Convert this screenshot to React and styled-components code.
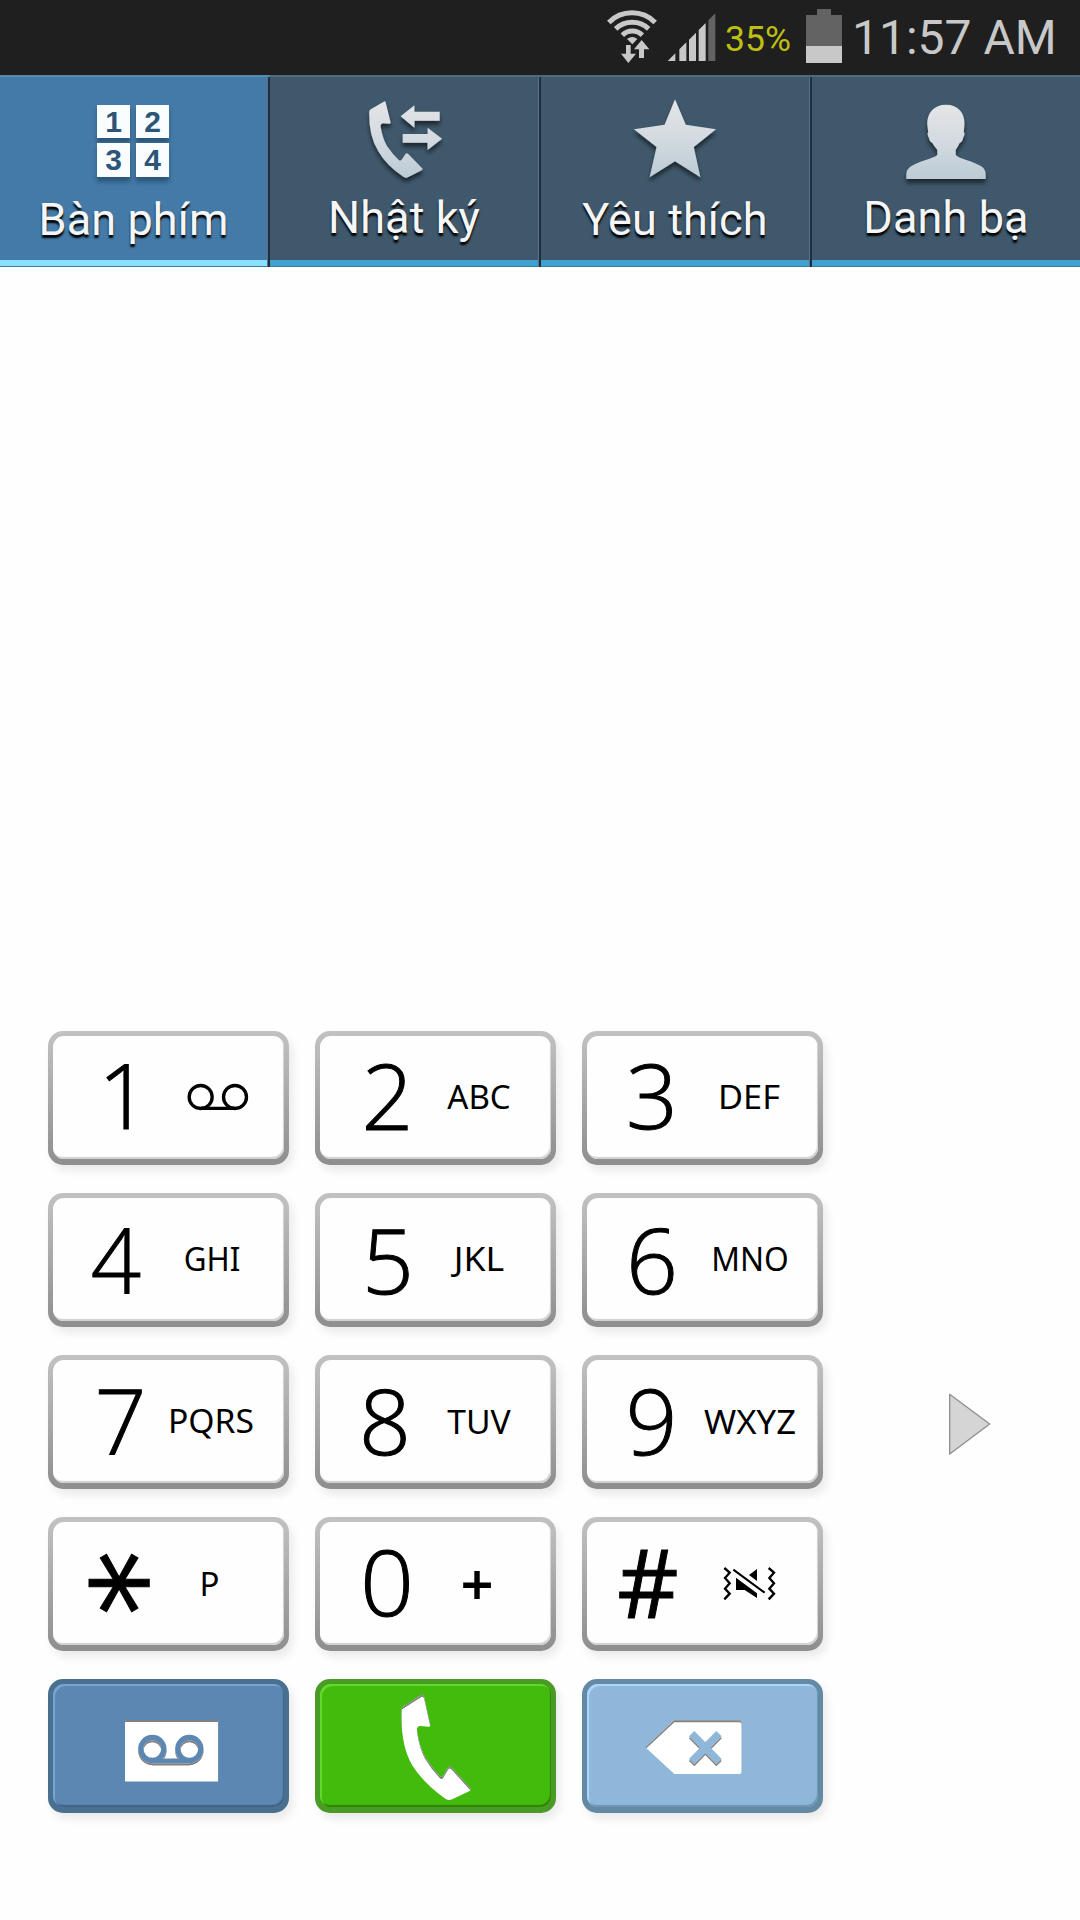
import React from "react";
import styled, { createGlobalStyle } from "styled-components";

const GlobalStyle = createGlobalStyle`
  * { box-sizing: border-box; }
  body { margin: 0; background: #fefefe; font-family: Roboto, "Noto Sans", sans-serif; }
`;

const Screen = styled.div`
  width: 1080px;
  height: 1920px;
  display: flex;
  flex-direction: column;
  background: #fefefe;
  overflow: hidden;
`;

const StatusBar = styled.header`
  height: 75px;
  flex: none;
  display: flex;
  justify-content: flex-end;
  align-items: flex-start;
  padding-right: 23px;
  background: #1f1f1f;
  color: #c8c8c8;
`;

const Icon = styled.svg`
  display: block;
  flex: none;
  width: ${(p) => p.$w}px;
  height: ${(p) => p.$h}px;
  margin: ${(p) => p.$top || 0}px 0 0 ${(p) => p.$left || 0}px;
`;

const BatteryLevel = styled.span`
  width: 67px;
  margin-left: 9px;
  font-size: 35.5px;
  line-height: 78px;
  color: #bfbf12;
  white-space: nowrap;
`;

const Clock = styled.time`
  width: 205px;
  margin-left: 10px;
  font-size: 48px;
  line-height: 75px;
  white-space: nowrap;
`;

const Tabs = styled.nav`
  height: 192px;
  flex: none;
  display: grid;
  grid-template-columns: 270px 271px 271px 268px;
`;

const Tab = styled.button`
  display: flex;
  flex-direction: column;
  align-items: center;
  margin: 0;
  padding: 0 ${(p) => (p.$last ? 0 : 3)}px 0 0;
  border: 0;
  border-top: 2px solid ${(p) => (p.$active ? "#5489b0" : "#52697d")};
  background:
    linear-gradient(${(p) => (p.$active ? "#8ce0ff, #8ce0ff" : "#41a0d0, #41a0d0")}) 0 183px / 100% 6px no-repeat,
    linear-gradient(#347fa5, #347fa5) 0 189px / 100% 1px no-repeat,
    ${(p) => (p.$active ? "#447aa7" : "#3f586b")};
  box-shadow: ${(p) => (p.$last ? "none" : "inset -2px 0 #1e303f, inset -3px 0 #5a7186")};
  font-family: inherit;
`;

const TabLabel = styled.span`
  margin-top: ${(p) => p.$top}px;
  font-size: 45px;
  line-height: 54px;
  letter-spacing: 0.1px;
  color: #f6f6f6;
  text-shadow: 0 3px 2px #000;
  white-space: nowrap;
`;

const Main = styled.main`
  flex: 1;
  display: flex;
  align-items: flex-start;
  padding: 764px 0 0 48px;
`;

const Pad = styled.div`
  display: grid;
  grid-template-columns: repeat(3, 241px);
  grid-auto-rows: 134px;
  gap: 28px 26px;
`;

const tones = {
  plain: { rim: "linear-gradient(#c2c2c2, #8e8e8e)", face: "#fefefe", inner: "inset -1px -2px 1px #d0d0d0" },
  blue: { rim: "#4a7090", face: "#5b87b2", inner: "inset 2px 2px 1px #79a5d3, inset -1px -2px 1px #3f6388" },
  green: { rim: "#4a9a26", face: "#42bb0c", inner: "inset 2px 2px 1px #62dc2c, inset -1px -2px 1px #2d8406" },
  sky: { rim: "#6489a5", face: "#8fb7da", inner: "inset 2px 2px 1px #aed6fa, inset -1px -2px 1px #6d94b5" },
};

const KeyShell = styled.button`
  display: flex;
  margin: 0;
  padding: 5px 5px 6px 5px;
  border: 0;
  border-radius: 15px;
  background: ${(p) => tones[p.$tone].rim};
  box-shadow: 4px 6px 9px rgba(0, 0, 0, 0.08);
  color: #000;
  text-align: left;
`;

const KeyFace = styled.span`
  flex: 1;
  height: 123px;
  display: flex;
  align-items: flex-start;
  border-radius: 11px;
  background: ${(p) => tones[p.$tone].face};
  box-shadow: ${(p) => tones[p.$tone].inner};
`;

const Digit = styled.span`
  width: 80px;
  margin-left: ${(p) => p.$cx - 45}px;
  text-align: center;
  font-family: "Open Sans", "Noto Sans", sans-serif;
  font-weight: ${(p) => p.$weight || 300};
  font-size: ${(p) => p.$size || 91}px;
  line-height: 122px;
  -webkit-text-stroke: 1px #000;
  transform: translateY(${(p) => (p.$dy || 0) - 3}px) scaleX(${(p) => p.$sx || 1});
`;

const StarDigit = styled(Digit)`
  font-family: "DejaVu Sans", sans-serif;
  font-weight: 400;
  font-size: 131px;
  transform: translateX(-24px) rotate(90deg);
`;

const Letters = styled.span`
  width: 120px;
  margin-left: ${(p) => p.$cx - p.$from - 100}px;
  display: flex;
  justify-content: center;
  font-family: "Noto Sans", "Open Sans", sans-serif;
  font-size: ${(p) => p.$size || 33}px;
  font-weight: ${(p) => p.$weight || 400};
  line-height: 120px;
  white-space: nowrap;
  transform: translateY(${(p) => p.$dy || 0}px) scaleX(${(p) => p.$sx || 1});
`;

const SidePanel = styled.aside`
  flex: 1;
  display: flex;
  align-items: flex-start;
`;

const WifiIcon = () => (
  <Icon $w={52} $h={56} $top={9} viewBox="48 27 156 168">
    <g fill="none" stroke="#c8c8c8" strokeWidth="15">
      <path d="M56.5 67.500A98 98 0 0 1 195.500 67.500" />
      <path d="M77 86.500A72 72 0 0 1 176 86.500" />
      <path d="M97 105.500A43 43 0 0 1 157 105.500" />
    </g>
    <path fill="#c8c8c8" d="M111 117Q127 105 142 117L127 133ZM108 135h14v26h16l-23 28-22-28h15ZM155 120l23 28h-16v26h-15v-26h-15Z" />
  </Icon>
);

const SignalIcon = () => (
  <Icon $w={49} $h={50} $top={12} $left={9} viewBox="233 36 147 150">
    <path fill="#c8c8c8" d="M235 183L258 160V183ZM270 148L291 127V183H270ZM299 119L320 98V183H299ZM328 90L349 69V183H328Z" />
    <path fill="#636363" d="M357 61L378 40V183H357Z" />
  </Icon>
);

const BatteryIcon = () => (
  <Icon $w={36} $h={54} $top={9} $left={14} viewBox="0 0 36 54">
    <path fill="#636363" d="M11 0H25V6H36V37H0V6H11Z" />
    <path fill="#c8c8c8" d="M0 37H36V54H0Z" />
  </Icon>
);

const SilverDefs = ({ id, y1, y2 }) => (
  <defs>
    <linearGradient id={id} gradientUnits="userSpaceOnUse" x1="0" x2="0" y1={y1} y2={y2}>
      <stop offset="0" stopColor="#e4e5e7" />
      <stop offset="0.5" stopColor="#d3dae0" />
      <stop offset="1" stopColor="#bccbd5" />
    </linearGradient>
    <filter id={id + "s"} x="-20%" y="-20%" width="140%" height="150%">
      <feDropShadow dx="0" dy="12" stdDeviation="6" floodColor="#000" floodOpacity="0.55" />
    </filter>
  </defs>
);

const MiniGrid = styled.span`
  display: grid;
  grid-template-columns: 33px 33px;
  grid-template-rows: 33px 34px;
  gap: 5px 6px;
  margin-top: 28px;
  margin-right: 1px;
`;

const MiniCell = styled.span`
  display: flex;
  justify-content: center;
  background: #fafdff;
  box-shadow: 0 5px 4px rgba(10, 35, 60, 0.4);
  color: #2c5578;
  font: bold 30px/34px "Liberation Sans", sans-serif;
`;

const CallLogIcon = () => (
  <Icon $w={83} $h={92} $top={21} $left={5} viewBox="1050 84 240 276" preserveAspectRatio="none">
    <SilverDefs id="log" y1="94" y2="324" />
    <g fill="url(#log)" filter="url(#logs)">
      <path d="M1062 127Q1062 120 1068 117L1104 95Q1109 92 1110 98L1124 157Q1125 161 1120 161L1103 160Q1094 161 1095 170Q1101 205 1114 229Q1130 253 1147 269Q1153 275 1157 268L1167 252Q1171 247 1175 252L1214 293Q1219 298 1214 301L1174 322Q1168 325 1161 320Q1112 287 1088 243Q1061 198 1062 127Z" />
      <path d="M1153 139L1193 106V125H1266V152H1193V173ZM1159 192H1231V173L1273 206L1231 240V218H1159Z" />
    </g>
  </Icon>
);

const StarIcon = () => (
  <Icon $w={96} $h={92} $top={20} viewBox="261 78 276 276" preserveAspectRatio="none">
    <SilverDefs id="star" y1="85" y2="320" />
    <path
      fill="url(#star)"
      filter="url(#stars)"
      d="M399 85L430 161L517 175L453 228L472 319L399 271L326 319L346 228L281 175L369 161Z"
    />
  </Icon>
);

const PersonIcon = () => (
  <Icon $w={96} $h={92} $top={25} viewBox="1043 96 276 276" preserveAspectRatio="none">
    <SilverDefs id="person" y1="105" y2="327" />
    <path
      fill="url(#person)"
      filter="url(#persons)"
      d="M1181 104C1216 104 1235 128 1234 162L1232 187C1237 190 1233 197 1230 205C1228 214 1225 218 1220 219Q1216 230 1209 239V255Q1216 263 1237 269Q1270 279 1288 293Q1295 301 1295 312V327H1067V312Q1067 301 1075 293Q1092 279 1125 269Q1148 262 1156 255V239Q1147 230 1142 219C1137 218 1134 212 1132 205C1129 197 1126 190 1130 187L1127 162C1127 128 1146 104 1181 104Z"
    />
  </Icon>
);

const TapeIcon = () => (
  <Icon $w={64} $h={30} $top={46} viewBox="436 186 192 90">
    <g fill="none" stroke="#000" strokeWidth="10">
      <circle cx="480" cy="231" r="34.500" />
      <circle cx="583" cy="231" r="34.500" />
      <path d="M480 265H583" />
    </g>
  </Icon>
);

const VibrateIcon = () => (
  <Icon $w={56} $h={36} $top={43} viewBox="24 15 168 108">
    <g fill="none" stroke="#000" strokeWidth="7">
      <path d="M31 24L47 38L33 54L47 70L33 86L47 101L31 118" />
      <path d="M164 24L180 38L166 54L180 70L166 86L180 101L164 118" />
      <path d="M58 29L152 98" strokeWidth="6" />
    </g>
    <path d="M129 27V63L105 45ZM66 53L129 100V114L92 90H66Z" />
  </Icon>
);

const ReliefFilter = ({ id }) => (
  <filter id={id} x="-10%" y="-10%" width="120%" height="120%" colorInterpolationFilters="sRGB">
    <feOffset in="SourceAlpha" dx="-1" dy="6" result="o" />
    <feGaussianBlur in="o" stdDeviation="1.500" result="b" />
    <feComposite in="SourceAlpha" in2="b" operator="out" result="edge" />
    <feFlood floodColor="#7c7878" floodOpacity="0.95" />
    <feComposite in2="edge" operator="in" result="shade" />
    <feMerge>
      <feMergeNode in="SourceGraphic" />
      <feMergeNode in="shade" />
    </feMerge>
  </filter>
);

const VoicemailIcon = () => (
  <Icon $w={98} $h={65} $top={35} $left={70} viewBox="249 177 294 195">
    <defs>
      <ReliefFilter id="vm" />
      <mask id="vmm">
        <rect x="255" y="180" width="280" height="185" rx="3" fill="#fff" />
        <g fill="none" stroke="#000" strokeWidth="16">
          <circle cx="337" cy="267" r="34.500" />
          <circle cx="448" cy="267" r="34.500" />
          <path d="M337 303H448" strokeWidth="15" />
        </g>
      </mask>
    </defs>
    <g filter="url(#vm)">
      <rect x="255" y="180" width="280" height="185" fill="#fff" mask="url(#vmm)" />
    </g>
  </Icon>
);

const CallIcon = () => (
  <Icon $w={73} $h={108} $top={10} $left={80} viewBox="30 27 219 324">
    <defs>
      <ReliefFilter id="call" />
    </defs>
    <path
      fill="#fff"
      filter="url(#call)"
      d="M35 72Q35 68 39 65L94 30Q100 27 102 34L121 119Q122 125 116 125L91 123Q79 124 81 136Q88 185 105 215Q125 248 149 273Q155 279 160 272L174 248Q179 242 184 247L241 310Q245 315 239 318L188 342Q177 348 166 341Q102 296 68 243Q30 180 35 72Z"
    />
  </Icon>
);

const DeleteIcon = () => (
  <Icon $w={100} $h={57} $top={35} $left={57} viewBox="642 177 300 171">
    <defs>
      <ReliefFilter id="del" />
      <mask id="delm">
        <path fill="#fff" d="M646 262L733 181H928Q935 181 935 188V335Q935 342 928 342H733Z" />
        <path stroke="#000" strokeWidth="23" d="M785 221L867 305M867 221L785 305" />
      </mask>
    </defs>
    <g filter="url(#del)">
      <path fill="#fff" mask="url(#delm)" d="M642 177H942V348H642Z" />
    </g>
  </Icon>
);

const ArrowIcon = () => (
  <Icon $w={45} $h={66} $top={361} $left={124} viewBox="81 66 135 198">
    <path fill="#d5d5d5" stroke="#8f8f8f" strokeWidth="4" strokeLinejoin="round" d="M89 73L209 162L89 252Z" />
  </Icon>
);

const keys = [
  { d: "1", cx: 76, dy: 0, icon: TapeIcon, lx: 169.5 },
  { d: "2", cx: 72.5, dy: 1, l: "ABC", lx: 164, ldy: 0.5 },
  { d: "3", cx: 70, dy: 0, l: "DEF", lx: 167, lsx: 1.04, ldy: 0.5 },
  { d: "4", cx: 68, sx: 0.97, dy: 3, l: "GHI", lx: 163.5, lsx: 0.95, ldy: 1 },
  { d: "5", cx: 73, dy: 3, l: "JKL", lx: 164, lsx: 1.08, ldy: 1 },
  { d: "6", cx: 70, dy: 3, l: "MNO", lx: 168, lsx: 0.96, ldy: 1 },
  { d: "7", cx: 72.5, dy: 2, l: "PQRS", lx: 162.5, lsx: 1.02, ldy: 1 },
  { d: "8", cx: 70, dy: 2, l: "TUV", lx: 164, lsx: 1.02, ldy: 1.5 },
  { d: "9", cx: 69.5, dy: 2, l: "WXYZ", lx: 168, lsx: 1.05, ldy: 1.5 },
  { d: "*", cx: 71.5, star: true, l: "P", lx: 161.5, ldy: 1.5 },
  { d: "0", cx: 71.5, sx: 1.04, dy: 1, l: "+", lx: 162, ldy: 1, lsize: 58, lweight: 600 },
  { d: "#", cx: 66, dy: 1, size: 95, weight: 400, icon: VibrateIcon, lx: 168 },
];

function PadKey({ k }) {
  const Sub = k.icon;
  const Glyph = k.star ? StarDigit : Digit;
  return (
    <KeyShell $tone="plain">
      <KeyFace $tone="plain">
        <Glyph $cx={k.cx} $sx={k.sx} $dy={k.dy} $size={k.size} $weight={k.weight}>
          {k.d}
        </Glyph>
        <Letters $from={k.cx} $cx={k.lx} $dy={k.ldy} $sx={k.lsx} $size={k.lsize} $weight={k.lweight}>
          {Sub ? <Sub /> : k.l}
        </Letters>
      </KeyFace>
    </KeyShell>
  );
}

function ActionKey({ tone, children }) {
  return (
    <KeyShell $tone={tone}>
      <KeyFace $tone={tone}>{children}</KeyFace>
    </KeyShell>
  );
}

export default function App() {
  return (
    <Screen>
      <GlobalStyle />
      <StatusBar>
        <WifiIcon />
        <SignalIcon />
        <BatteryLevel>35%</BatteryLevel>
        <BatteryIcon />
        <Clock>11:57 AM</Clock>
      </StatusBar>
      <Tabs>
        <Tab $active>
          <MiniGrid>
            {["1", "2", "3", "4"].map((n) => (
              <MiniCell key={n}>{n}</MiniCell>
            ))}
          </MiniGrid>
          <TabLabel $top={16}>Bàn phím</TabLabel>
        </Tab>
        <Tab>
          <CallLogIcon />
          <TabLabel $top={1}>Nhật ký</TabLabel>
        </Tab>
        <Tab>
          <StarIcon />
          <TabLabel $top={4}>Yêu thích</TabLabel>
        </Tab>
        <Tab $last>
          <PersonIcon />
          <TabLabel $top={-3}>Danh bạ</TabLabel>
        </Tab>
      </Tabs>
      <Main>
        <Pad>
          {keys.map((k) => (
            <PadKey key={k.d} k={k} />
          ))}
          <ActionKey tone="blue">
            <VoicemailIcon />
          </ActionKey>
          <ActionKey tone="green">
            <CallIcon />
          </ActionKey>
          <ActionKey tone="sky">
            <DeleteIcon />
          </ActionKey>
        </Pad>
        <SidePanel>
          <ArrowIcon />
        </SidePanel>
      </Main>
    </Screen>
  );
}
